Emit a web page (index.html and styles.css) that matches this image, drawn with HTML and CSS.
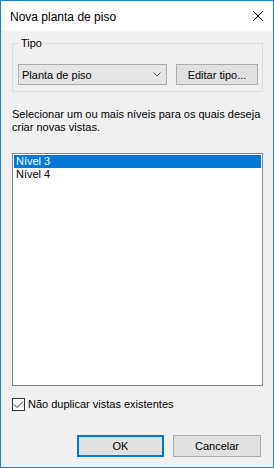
FILE: index.html
```html
<!DOCTYPE html>
<html lang="pt">
<head>
<meta charset="utf-8">
<title>Nova planta de piso</title>
<link rel="stylesheet" href="styles.css">
</head>
<body>
<div class="window">
  <div class="titlebar">
    <span class="title">Nova planta de piso</span>
    <span class="close" aria-label="Fechar">
      <svg width="10" height="10" viewBox="0 0 10 10"><path d="M0 0L10 10M10 0L0 10" stroke="#000" stroke-width="1" fill="none"/></svg>
    </span>
  </div>
  <div class="client">
    <fieldset class="group">
      <legend>Tipo</legend>
      <div class="type-row">
        <div class="combo">
          <span class="combo-text">Planta de piso</span>
          <svg class="chev" width="8" height="5" viewBox="0 0 8 5"><path d="M0.5 0.5L4 4L7.5 0.5" stroke="#606060" stroke-width="1" fill="none"/></svg>
        </div>
        <button class="btn edit">Editar tipo...</button>
      </div>
    </fieldset>
    <p class="prompt">Selecionar um ou mais níveis para os quais deseja<br>criar novas vistas.</p>
    <div class="listbox">
      <div class="item selected">Nível 3</div>
      <div class="item">Nível 4</div>
    </div>
    <label class="check">
      <span class="box"><svg width="11" height="11" viewBox="0 0 11 11"><path d="M1 5.5L4 8.5L10 2.5" stroke="#333" stroke-width="1" fill="none"/></svg></span>
      <span>Não duplicar vistas existentes</span>
    </label>
    <div class="buttons">
      <button class="btn ok">OK</button>
      <button class="btn cancel">Cancelar</button>
    </div>
  </div>
</div>
</body>
</html>
```
FILE: styles.css
```css
html, body {
  margin: 0;
  padding: 0;
  background: #f0f0f0;
}
body {
  font-family: "Liberation Sans", Arial, sans-serif;
  font-size: 11px;
  color: #000;
}
.window {
  width: 274px;
  height: 468px;
  box-sizing: border-box;
  border: 1px solid #1883d7;
  display: flex;
  flex-direction: column;
  background: #f0f0f0;
}
.titlebar {
  height: 30px;
  background: #fff;
  display: flex;
  align-items: center;
  justify-content: space-between;
  padding: 0 10px 0 9px;
  flex: none;
}
.title {
  font-size: 12px;
  line-height: 16px;
  padding-top: 1px;
}
.close {
  display: flex;
  width: 10px;
  height: 10px;
  margin-top: 0;
}
.client {
  flex: 1;
  display: flex;
  flex-direction: column;
  padding: 0 10px 0 11px;
}
.group {
  margin: 6px 0 0 0;
  border: 1px solid #dcdcdc;
  padding: 14px 4px 6px 5px;
  min-width: 0;
}
.group legend {
  padding: 0 2px;
  margin-left: 1px;
  line-height: 13px;
}
.type-row {
  display: flex;
  gap: 9px;
}
.combo {
  width: 149px;
  height: 21px;
  box-sizing: border-box;
  border: 1px solid #acacac;
  background: #e5e5e5;
  display: flex;
  align-items: center;
  justify-content: space-between;
  padding: 0 5px 0 3px;
}
.chev {
  display: block;
}
.btn {
  font-family: inherit;
  font-size: 11px;
  color: #000;
  background: #e1e1e1;
  border: 1px solid #adadad;
  box-sizing: border-box;
  padding: 0;
  margin: 0;
  height: 21px;
}
.edit {
  width: 82px;
}
.prompt {
  margin: 16px 0 0 0;
  line-height: 13px;
}
.listbox {
  margin-top: 19px;
  height: 233px;
  box-sizing: border-box;
  border: 1px solid #828790;
  background: #fff;
  padding: 1px;
}
.item {
  height: 13px;
  line-height: 13px;
  padding-left: 2px;
}
.item.selected {
  background: #0078d7;
  color: #fff;
}
.check {
  margin-top: 12px;
  display: flex;
  align-items: center;
  gap: 3px;
  height: 13px;
  line-height: 13px;
}
.box {
  width: 13px;
  height: 13px;
  box-sizing: border-box;
  border: 1px solid #333;
  background: #fff;
  display: flex;
}
.buttons {
  margin-top: 24px;
  display: flex;
  justify-content: flex-end;
  gap: 9px;
  padding-right: 2px;
}
.ok, .cancel {
  height: 22px;
}
.ok {
  width: 87px;
  border: 2px solid #0078d7;
}
.cancel {
  width: 88px;
}
```
